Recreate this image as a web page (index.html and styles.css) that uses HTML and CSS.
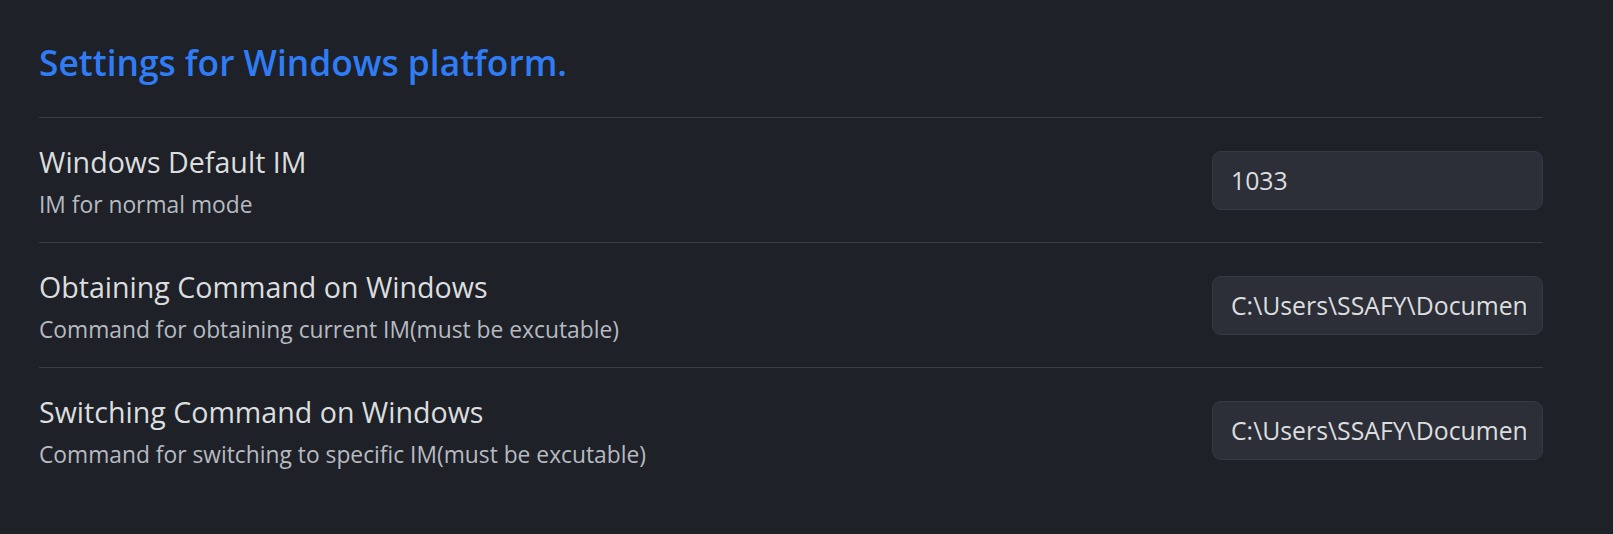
FILE: index.html
```html
<!DOCTYPE html>
<html lang="en">
<head>
<meta charset="utf-8">
<title>Settings</title>
<link rel="stylesheet" href="styles.css">
</head>
<body>
<div class="settings">
  <h3 class="section-title">Settings for Windows platform.</h3>
  <div class="setting-item">
    <div class="setting-info">
      <div class="setting-name">Windows Default IM</div>
      <div class="setting-desc">IM for normal mode</div>
    </div>
    <div class="setting-control">
      <input class="text-input" type="text" value="1033">
    </div>
  </div>
  <div class="setting-item">
    <div class="setting-info">
      <div class="setting-name">Obtaining Command on Windows</div>
      <div class="setting-desc">Command for obtaining current IM(must be excutable)</div>
    </div>
    <div class="setting-control">
      <input class="text-input" type="text" value="C:\Users\SSAFY\Documents\im-select.exe">
    </div>
  </div>
  <div class="setting-item">
    <div class="setting-info">
      <div class="setting-name">Switching Command on Windows</div>
      <div class="setting-desc">Command for switching to specific IM(must be excutable)</div>
    </div>
    <div class="setting-control">
      <input class="text-input" type="text" value="C:\Users\SSAFY\Documents\im-select.exe {im}">
    </div>
  </div>
</div>
</body>
</html>
```
FILE: styles.css
```css
html, body {
  margin: 0;
  padding: 0;
  background: #1e2128;
  height: 100%;
}
body {
  font-family: "Segoe UI", "Open Sans", "Noto Sans", sans-serif;
  color: #dcddde;
}
.settings {
  width: 1504px;
  padding: 34px 0 0 39px;
}
.section-title {
  margin: 0;
  font-size: 35.3px;
  font-weight: 600;
  color: #2f7cf5;
  line-height: 56px;
  padding-bottom: 27px;
  border-bottom: 1px solid #3a3d44;
}
.setting-item {
  display: flex;
  align-items: center;
  justify-content: space-between;
  padding: 23px 0;
  border-top: 1px solid #3a3d44;
}
.section-title + .setting-item {
  border-top: none;
}
.setting-info {
  display: flex;
  flex-direction: column;
  gap: 12px;
  padding-top: 4px;
}
.setting-name {
  font-size: 28.6px;
  line-height: 34px;
  color: #dcddde;
}
.setting-desc {
  font-size: 22.8px;
  line-height: 28px;
  color: #b7bac0;
}
.setting-control {
  display: flex;
}
.text-input {
  box-sizing: border-box;
  width: 331px;
  height: 59px;
  padding: 0 16px 0 18px;
  background: #2c2f38;
  border: 1px solid #363943;
  border-radius: 9px;
  color: #dcddde;
  font-family: "Segoe UI", "Open Sans", "Noto Sans", sans-serif;
  font-size: 24.8px;
  outline: none;
}
```
